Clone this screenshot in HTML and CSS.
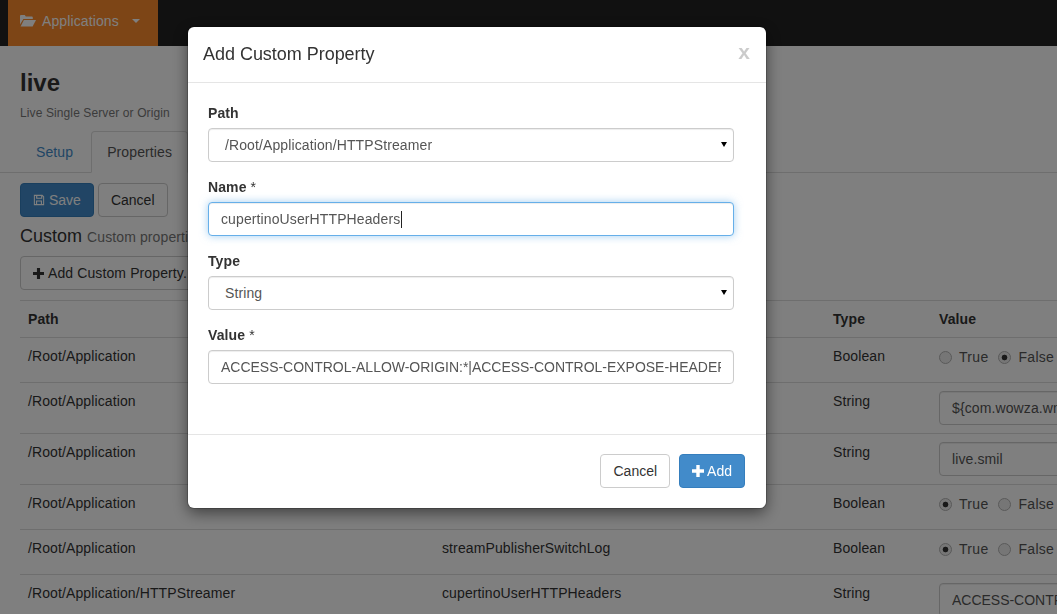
FILE: index.html
```html
<!DOCTYPE html>
<html lang="en">
<head>
<meta charset="utf-8">
<title>Add Custom Property</title>
<link rel="stylesheet" href="styles.css">
</head>
<body>
<header class="navbar">
  <a class="nav-app">
    <svg class="icon-folder" viewBox="0 0 16 14" aria-hidden="true"><path d="M0 2.2C0 1.5.5 1 1.2 1h3.6l1 1.5h5.9c.6 0 1.1.5 1.1 1.1V5H3.4L0 10.5z"/><path d="M3.9 6H16l-3.4 6.5H.6z"/></svg>
    <span class="nav-label">Applications</span>
    <span class="caret"></span>
  </a>
</header>

<main class="page">
  <h1 class="title">live</h1>
  <p class="subtitle">Live Single Server or Origin</p>

  <nav class="tabs">
    <a class="tab">Setup</a>
    <a class="tab tab-active">Properties</a>
  </nav>

  <div class="actions">
    <button class="btn btn-primary"><svg class="icon icon-save" viewBox="0 0 14 14" aria-hidden="true"><path fill-rule="evenodd" d="M1 1h10l2 2v10H1zM2.2 2.2v9.6h1.3V7.5h7v4.3h1.3V3.6l-1-1.1v3H3.6V2.2zM5 2.2v2.2h4.5V2.2zM4.8 8.7v3.1h4.4V8.7z"/></svg>Save</button>
    <button class="btn btn-default">Cancel</button>
  </div>

  <h3 class="section">Custom <small>Custom properties</small></h3>

  <button class="btn btn-default btn-add"><svg class="icon icon-plus" viewBox="0 0 12 12" aria-hidden="true"><path d="M4.3 0h3.4v4.3H12v3.4H7.7V12H4.3V7.7H0V4.3h4.3z"/></svg>Add Custom Property...</button>

  <table class="props">
    <colgroup><col class="col-path"><col class="col-name"><col class="col-type"><col class="col-value"></colgroup>
    <thead>
      <tr><th>Path</th><th>Name</th><th>Type</th><th>Value</th></tr>
    </thead>
    <tbody>
      <tr>
        <td>/Root/Application</td><td></td><td>Boolean</td>
        <td><div class="radios"><label class="radio"><input type="radio" name="r1">True</label><label class="radio"><input type="radio" name="r1" checked>False</label></div></td>
      </tr>
      <tr>
        <td>/Root/Application</td><td></td><td>String</td>
        <td><input class="form-control" value="${com.wowza.wms.context.VHostConfigHome}"></td>
      </tr>
      <tr>
        <td>/Root/Application</td><td></td><td>String</td>
        <td><input class="form-control" value="live.smil"></td>
      </tr>
      <tr>
        <td>/Root/Application</td><td></td><td>Boolean</td>
        <td><div class="radios"><label class="radio"><input type="radio" name="r2" checked>True</label><label class="radio"><input type="radio" name="r2">False</label></div></td>
      </tr>
      <tr>
        <td>/Root/Application</td><td>streamPublisherSwitchLog</td><td>Boolean</td>
        <td><div class="radios"><label class="radio"><input type="radio" name="r3" checked>True</label><label class="radio"><input type="radio" name="r3">False</label></div></td>
      </tr>
      <tr>
        <td>/Root/Application/HTTPStreamer</td><td>cupertinoUserHTTPHeaders</td><td>String</td>
        <td><input class="form-control long-value" value="ACCESS-CONTROL-ALLOW-ORIGIN:*|ACCESS-CONTROL-EXPOSE-HEADERS"></td>
      </tr>
    </tbody>
  </table>
</main>

<div class="backdrop">
  <section class="modal">
    <div class="modal-header">
      <h4 class="modal-title">Add Custom Property</h4>
      <span class="close">x</span>
    </div>
    <form class="modal-body">
      <div class="form-group">
        <label class="field-label">Path</label>
        <div class="select-wrap">
          <select class="form-control select"><option>/Root/Application/HTTPStreamer</option></select>
        </div>
      </div>
      <div class="form-group">
        <label class="field-label">Name <span class="req">*</span></label>
        <div class="form-control focused">cupertinoUserHTTPHeaders<span class="text-caret"></span></div>
      </div>
      <div class="form-group">
        <label class="field-label">Type</label>
        <div class="select-wrap">
          <select class="form-control select"><option>String</option></select>
        </div>
      </div>
      <div class="form-group">
        <label class="field-label">Value <span class="req">*</span></label>
        <input class="form-control long-value" value="ACCESS-CONTROL-ALLOW-ORIGIN:*|ACCESS-CONTROL-EXPOSE-HEADERS:Content-Length">
      </div>
    </form>
    <div class="modal-footer">
      <button class="btn btn-default">Cancel</button>
      <button class="btn btn-primary btn-modal-add"><svg class="icon icon-plus" viewBox="0 0 12 12" aria-hidden="true"><path d="M4.3 0h3.4v4.3H12v3.4H7.7V12H4.3V7.7H0V4.3h4.3z"/></svg>Add</button>
    </div>
  </section>
</div>
</body>
</html>
```

FILE: styles.css
```css
* { box-sizing: border-box; }

html, body {
  height: 100%;
  overflow: hidden;
}

body {
  margin: 0;
  background: #fff;
  color: #333;
  font-family: "Liberation Sans", Arial, sans-serif;
  font-size: 14px;
  line-height: 20px;
  letter-spacing: .11px;
}

.navbar {
  height: 46px;
  background: #222;
  padding-left: 8px;
}

.nav-app {
  display: flex;
  align-items: center;
  width: 150px;
  height: 46px;
  padding: 0 0 4px 12px;
  background: #fa8a2c;
  color: #fff;
}

.icon-folder {
  width: 16px;
  height: 14px;
  margin-right: 6px;
  fill: currentColor;
}

.caret {
  width: 0;
  height: 0;
  margin-left: 13px;
  border-top: 4px solid currentColor;
  border-left: 4px solid transparent;
  border-right: 4px solid transparent;
}

.page {
  width: 1100px;
  padding: 0 0 0 20px;
}

.title {
  margin: 24px 0 0;
  font-size: 24px;
  line-height: 26px;
  font-weight: 700;
  letter-spacing: 0;
  color: #333;
}

.subtitle {
  margin: 9px 0 9px;
  font-size: 12px;
  line-height: 17px;
  color: #777;
}

.tabs {
  display: flex;
  gap: 2px;
  margin-left: -20px;
  padding-left: 20px;
  border-bottom: 1px solid #ddd;
  height: 42px;
}

.tab {
  height: 42px;
  padding: 10px 15px;
  border: 1px solid transparent;
  border-radius: 4px 4px 0 0;
  color: #428bca;
}

.tab-active {
  border-color: #ddd;
  border-bottom-color: #fff;
  background: #fff;
  color: #555;
}

.actions {
  display: flex;
  gap: 4px;
  margin-top: 10px;
}

.btn {
  display: inline-flex;
  align-items: center;
  height: 34px;
  padding: 6px 12px;
  border: 1px solid transparent;
  border-radius: 4px;
  font-family: inherit;
  font-size: 14px;
  line-height: 20px;
  letter-spacing: 0;
  white-space: nowrap;
}

.btn-primary {
  background: #428bca;
  border-color: #357ebd;
  color: #fff;
}

.btn-default {
  background: #fff;
  border-color: #ccc;
  color: #333;
}

.btn-add {
  display: flex;
  width: fit-content;
  letter-spacing: .11px;
}

.icon {
  fill: currentColor;
  margin-right: 4px;
}

.icon-save {
  width: 12px;
  height: 12px;
}

.icon-plus {
  width: 11px;
  height: 11px;
}

.btn-modal-add .icon-plus {
  width: 12px;
  height: 12px;
  margin-right: 3px;
}

.section {
  margin: 9px 0 9px;
  font-size: 18px;
  line-height: 20px;
  font-weight: 400;
  letter-spacing: 0;
  color: #333;
}

.section small {
  font-size: 14px;
  letter-spacing: .11px;
  color: #777;
}

.props {
  width: 1080px;
  margin-top: 10px;
  table-layout: fixed;
  border-collapse: collapse;
}

.col-path { width: 414px; }
.col-name { width: 391px; }
.col-type { width: 106px; }

.props th,
.props td {
  padding: 8px;
  border-top: 1px solid #ddd;
  text-align: left;
  vertical-align: top;
}

.props th { font-weight: 700; }

.radios {
  display: flex;
  gap: 10px;
  height: 28px;
  padding-top: 1px;
}

.radio {
  display: flex;
  align-items: center;
  height: 20px;
  gap: 7px;
  color: #555;
  letter-spacing: .3px;
}

.radio input {
  appearance: none;
  width: 13px;
  height: 13px;
  margin: 0;
  border: 1px solid #b4b4b4;
  border-radius: 50%;
  background: #ececec;
}

.radio input:checked {
  background: radial-gradient(circle, #333 0 2.5px, #ececec 3.2px);
}

.form-control {
  display: block;
  width: 100%;
  height: 34px;
  padding: 6px 12px;
  border: 1px solid #ccc;
  border-radius: 4px;
  background: #fff;
  color: #555;
  font-family: inherit;
  font-size: 14px;
  line-height: 20px;
  letter-spacing: inherit;
  box-shadow: inset 0 1px 1px rgba(0, 0, 0, .075);
}

.long-value { letter-spacing: -.02px; }

.focused {
  border-color: #66afe9;
  box-shadow: inset 0 1px 1px rgba(0, 0, 0, .075), 0 0 8px rgba(102, 175, 233, .6);
}

.text-caret {
  display: inline-block;
  width: 1px;
  height: 17px;
  margin-left: 1px;
  vertical-align: -4px;
  background: #222;
}

.backdrop {
  position: fixed;
  inset: 0;
  padding: 27px 0 0 188px;
  background: rgba(0, 0, 0, .5);
}

.modal {
  width: 578px;
  background: #fff;
  border-radius: 6px;
  box-shadow: 0 0 0 1px rgba(0, 0, 0, .2), 0 5px 15px rgba(0, 0, 0, .5);
}

.modal-header {
  display: flex;
  align-items: center;
  justify-content: space-between;
  height: 56px;
  padding: 0 16px 2px 15px;
  border-bottom: 1px solid #e5e5e5;
}

.modal-title {
  margin: 0;
  font-size: 18px;
  font-weight: 400;
  letter-spacing: -.03px;
  color: #333;
}

.close {
  margin-bottom: 3px;
  font-size: 21px;
  font-weight: 700;
  color: #000;
  opacity: .2;
}

.modal-body {
  padding: 20px 32px 50px 20px;
}

.form-group + .form-group { margin-top: 15px; }

.field-label {
  display: block;
  margin-bottom: 5px;
  font-weight: 700;
}

.req { font-weight: 400; }

.select-wrap { position: relative; }

.select-wrap::after {
  content: "";
  position: absolute;
  right: 7px;
  top: 14px;
  border-top: 5px solid #000;
  border-left: 3px solid transparent;
  border-right: 3px solid transparent;
  pointer-events: none;
}

.select {
  appearance: none;
  padding-left: 16px;
}

.modal-footer {
  display: flex;
  justify-content: flex-end;
  gap: 9px;
  padding: 19px 21px 20px;
  border-top: 1px solid #e5e5e5;
}
```
